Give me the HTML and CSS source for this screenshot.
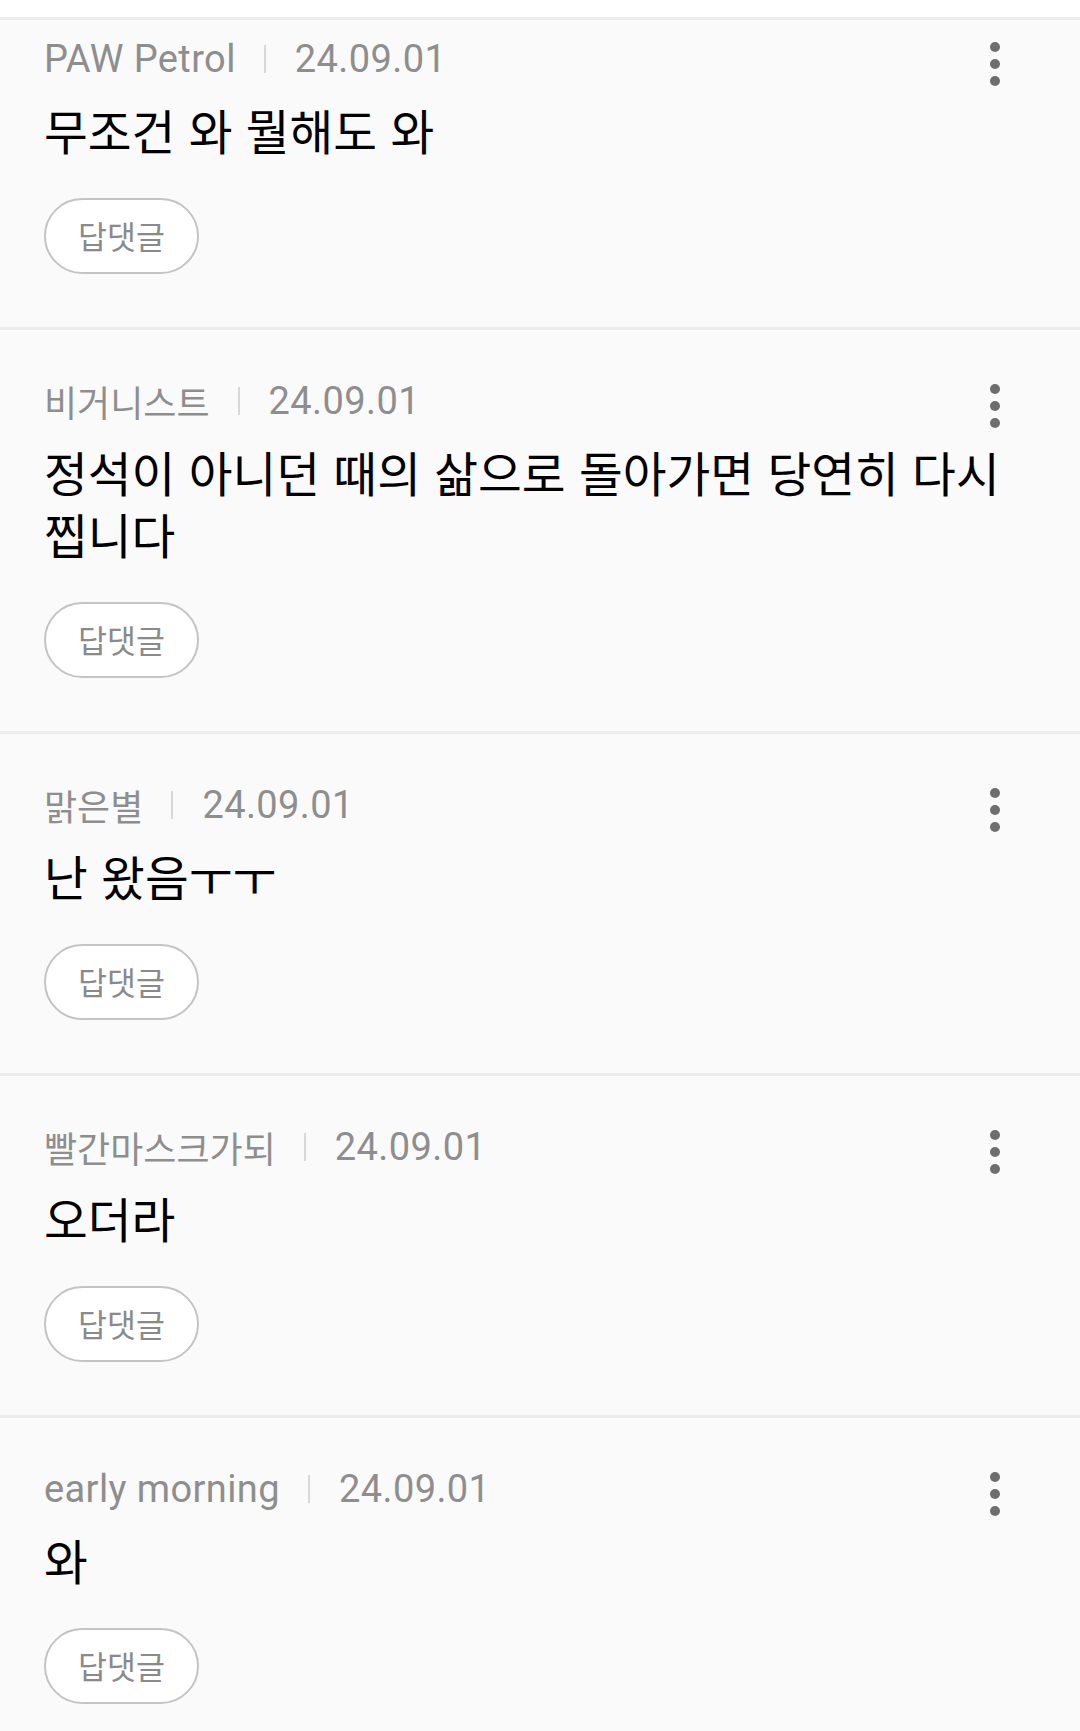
FILE: index.html
```html
<!DOCTYPE html>
<html lang="ko">
<head>
<meta charset="utf-8">
<title>댓글</title>
<link rel="stylesheet" href="styles.css">
</head>
<body>
<div class="top-strip"></div>
<ul class="comments">
  <li class="comment comment--clipped">
    <div class="meta">
      <span class="author">PAW Petrol</span>
      <span class="divider"></span>
      <span class="date">24.09.01</span>
      <button class="more" aria-label="더보기"><i></i><i></i><i></i></button>
    </div>
    <p class="text">무조건 와 뭘해도 와</p>
    <button class="reply">답댓글</button>
  </li>
  <li class="comment">
    <div class="meta">
      <span class="author author--ko">비거니스트</span>
      <span class="divider"></span>
      <span class="date">24.09.01</span>
      <button class="more" aria-label="더보기"><i></i><i></i><i></i></button>
    </div>
    <p class="text">정석이 아니던 때의 삶으로 돌아가면 당연히 다시 찝니다</p>
    <button class="reply">답댓글</button>
  </li>
  <li class="comment">
    <div class="meta">
      <span class="author author--ko">맑은별</span>
      <span class="divider"></span>
      <span class="date">24.09.01</span>
      <button class="more" aria-label="더보기"><i></i><i></i><i></i></button>
    </div>
    <p class="text">난 왔음ㅜㅜ</p>
    <button class="reply">답댓글</button>
  </li>
  <li class="comment">
    <div class="meta">
      <span class="author author--ko">빨간마스크가되</span>
      <span class="divider"></span>
      <span class="date">24.09.01</span>
      <button class="more" aria-label="더보기"><i></i><i></i><i></i></button>
    </div>
    <p class="text">오더라</p>
    <button class="reply">답댓글</button>
  </li>
  <li class="comment">
    <div class="meta">
      <span class="author">early morning</span>
      <span class="divider"></span>
      <span class="date">24.09.01</span>
      <button class="more" aria-label="더보기"><i></i><i></i><i></i></button>
    </div>
    <p class="text">와</p>
    <button class="reply">답댓글</button>
  </li>
</ul>
</body>
</html>
```

FILE: styles.css
```css
html, body {
  margin: 0;
  padding: 0;
  height: 1731px;
  overflow: hidden;
  background: #fafafa;
}

body {
  font-family: Roboto, "Noto Sans CJK KR", sans-serif;
}

.top-strip {
  height: 17px;
  background: #ffffff;
}

.comments {
  list-style: none;
  margin: 0;
  padding: 0;
}

.comment {
  display: flex;
  flex-direction: column;
  align-items: flex-start;
  border-top: 3px solid #ececec;
  background: #fafafa;
  padding: 47px 60px 53px 44px;
}

.comment--clipped {
  padding-top: 15px;
}

.meta {
  align-self: stretch;
  display: flex;
  align-items: center;
  height: 48px;
  font-size: 38px;
  color: #8e8e8e;
  letter-spacing: 0.4px;
  white-space: nowrap;
}

.author--ko {
  font-family: "Noto Sans CJK KR", sans-serif;
  font-size: 36px;
  letter-spacing: 0;
}

.divider {
  width: 2px;
  height: 28px;
  background: #d8d8d8;
  margin: 0 29px 0 28px;
}

.more {
  margin-left: auto;
  margin-right: 20px;
  margin-top: 10px;
  width: 10px;
  height: 44px;
  padding: 0;
  border: 0;
  background: transparent;
  display: flex;
  flex-direction: column;
  justify-content: space-between;
  align-items: center;
}

.more i {
  display: block;
  width: 10px;
  height: 10px;
  border-radius: 50%;
  background: #6e6e6e;
}

.text {
  margin: 16px 0 0;
  font-family: "Noto Sans CJK KR", sans-serif;
  font-size: 47.6px;
  font-weight: 400;
  line-height: 62px;
  color: #000000;
}

.reply {
  margin-top: 37px;
  box-sizing: border-box;
  height: 76px;
  padding: 0 32px;
  border: 2px solid #c4c4c4;
  border-radius: 38px;
  background: #ffffff;
  font-family: "Noto Sans CJK KR", sans-serif;
  font-size: 31.5px;
  color: #8a8a8a;
  line-height: 1;
}
```
